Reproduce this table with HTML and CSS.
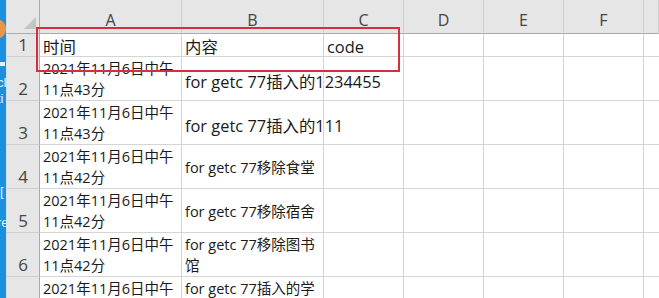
FILE: index.html
```html
<!DOCTYPE html>
<html lang="zh">
<head>
<meta charset="utf-8">
<title>Sheet</title>
<link rel="stylesheet" href="styles.css">
</head>
<body>
<div class="screen">
  <div class="side">
    <div class="side-dot"></div>
    <div class="side-bar"></div>
    <div class="side-txt t1">cl</div>
    <div class="side-txt t2">ti</div>
    <div class="side-txt t3">[</div>
    <div class="side-txt t4">re</div>
  </div>
  <div class="sheet">
    <div class="corner"><span class="tri"></span></div>
    <div class="colh">A</div>
    <div class="colh">B</div>
    <div class="colh">C</div>
    <div class="colh">D</div>
    <div class="colh">E</div>
    <div class="colh">F</div>
    <div class="colh last"></div>

    <div class="rowh">1</div>
    <div class="cell big head">时间</div>
    <div class="cell big head">内容</div>
    <div class="cell big head">code</div>
    <div class="cell"></div><div class="cell"></div><div class="cell"></div><div class="cell last"></div>

    <div class="rowh">2</div>
    <div class="cell wrap">2021年11月6日中午<br>11点43分</div>
    <div class="cell big mid">for getc 77插入的1234455</div>
    <div class="cell"></div>
    <div class="cell"></div><div class="cell"></div><div class="cell"></div><div class="cell last"></div>

    <div class="rowh">3</div>
    <div class="cell wrap">2021年11月6日中午<br>11点43分</div>
    <div class="cell big mid">for getc 77插入的111</div>
    <div class="cell"></div>
    <div class="cell"></div><div class="cell"></div><div class="cell"></div><div class="cell last"></div>

    <div class="rowh">4</div>
    <div class="cell wrap">2021年11月6日中午<br>11点42分</div>
    <div class="cell small">for getc 77移除食堂</div>
    <div class="cell"></div>
    <div class="cell"></div><div class="cell"></div><div class="cell"></div><div class="cell last"></div>

    <div class="rowh">5</div>
    <div class="cell wrap">2021年11月6日中午<br>11点42分</div>
    <div class="cell small">for getc 77移除宿舍</div>
    <div class="cell"></div>
    <div class="cell"></div><div class="cell"></div><div class="cell"></div><div class="cell last"></div>

    <div class="rowh">6</div>
    <div class="cell wrap">2021年11月6日中午<br>11点42分</div>
    <div class="cell wrap">for getc 77移除图书<br>馆</div>
    <div class="cell"></div>
    <div class="cell"></div><div class="cell"></div><div class="cell"></div><div class="cell last"></div>

    <div class="rowh">7</div>
    <div class="cell wrap">2021年11月6日中午</div>
    <div class="cell wrap">for getc 77插入的学</div>
    <div class="cell"></div>
    <div class="cell"></div><div class="cell"></div><div class="cell"></div><div class="cell last"></div>
  </div>
  <div class="mark"></div>
</div>
</body>
</html>
```
FILE: styles.css
```css
* { box-sizing: border-box; }
html, body { margin: 0; padding: 0; background: #fff; }
body { width: 659px; height: 298px; overflow: hidden; }

.screen {
  position: relative;
  display: flex;
  width: 659px;
  height: 298px;
  overflow: hidden;
  font-family: "Open Sans", "Noto Sans CJK SC", sans-serif;
  color: #1a1a1a;
}

.side {
  position: relative;
  width: 7px;
  flex: none;
  background: #1b8fe0;
  border-right: 1px solid #cfe3f3;
  overflow: hidden;
}
.side-dot {
  position: absolute;
  left: -8px; top: 20px;
  width: 14px; height: 18px;
  border-radius: 50%;
  background: #e9964a;
}
.side-bar {
  position: absolute;
  left: 0; top: 62px;
  width: 5px; height: 4px;
  background: #e8eef5;
}
.side-txt {
  position: absolute;
  left: -3px;
  color: #e8f2fb;
  font-family: "Liberation Sans", sans-serif;
  font-size: 13px;
  line-height: 14px;
}
.t1 { top: 76px; }
.t2 { top: 92px; }
.t3 { top: 185px; left: 0; }
.t4 { top: 216px; }

.sheet {
  flex: 1;
  display: grid;
  grid-template-columns: 33px 142px 142px 80px 80px 80px 80px 1fr;
  grid-template-rows: 34px 23px 44px 44px 44px 44px 44px 44px;
}

.corner {
  position: relative;
  background: #e6e6e6;
  border-right: 1px solid #ababab;
  border-bottom: 1px solid #ababab;
}
.tri {
  position: absolute;
  right: 3px; bottom: 4px;
  width: 0; height: 0;
  border-left: 12px solid transparent;
  border-bottom: 12px solid #c4c4c4;
}

.colh {
  background: #e6e6e6;
  border-right: 1px solid #cfcfcf;
  border-bottom: 1px solid #ababab;
  display: flex;
  align-items: flex-end;
  justify-content: center;
  padding-bottom: 2px;
  font-size: 16px;
  color: #444;
  line-height: 22px;
}

.rowh {
  background: #e6e6e6;
  border-right: 1px solid #ababab;
  border-bottom: 1px solid #cfcfcf;
  display: flex;
  align-items: flex-end;
  justify-content: center;
  font-size: 17px;
  color: #444;
  line-height: 22px;
}

.cell {
  border-right: 1px solid #d4d4d4;
  border-bottom: 1px solid #d4d4d4;
  padding: 0 0 0 3px;
  font-size: 14.5px;
  line-height: 21px;
  white-space: nowrap;
  display: flex;
  align-items: center;
}
.cell.big { font-size: 16.4px; }
.cell.head { padding-top: 3px; }
.cell.wrap { align-items: flex-start; padding-top: 1px; }
.cell.mid { padding-top: 6px; }
.cell.small { padding-top: 1px; }
.cell.last { border-right: none; }

.mark {
  position: absolute;
  left: 36px; top: 27px;
  width: 364px; height: 45px;
  border: 2px solid #d3303b;
  pointer-events: none;
}
```
